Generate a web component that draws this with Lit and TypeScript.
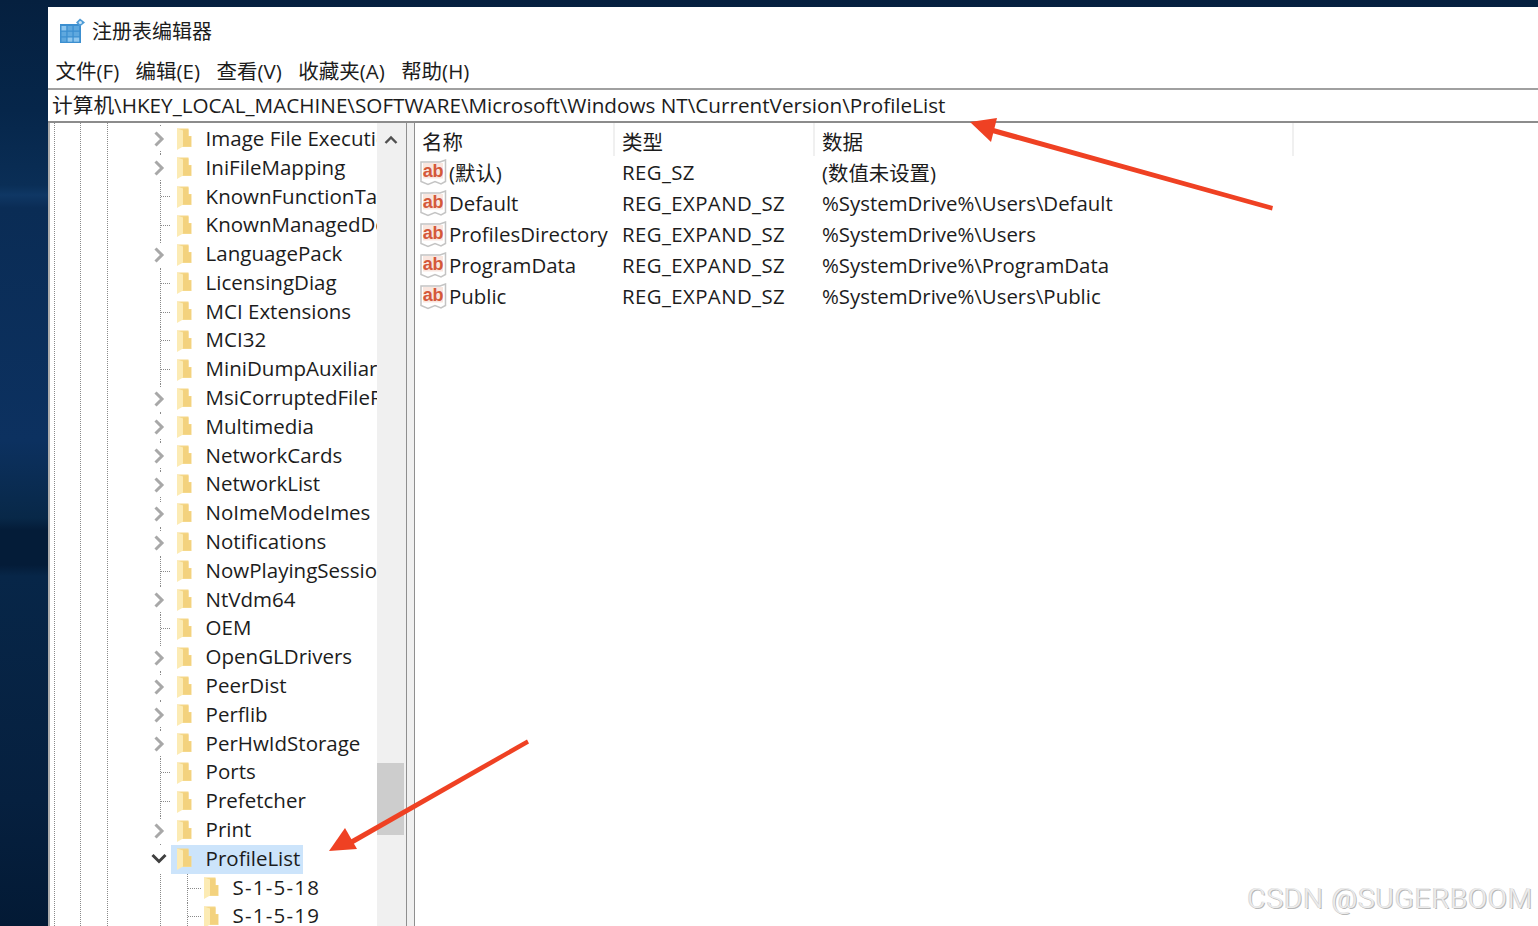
import { LitElement, html, css, svg } from "lit";
import { customElement } from "lit/decorators.js";

type Kind = "exp" | "leaf";
const rows: [string, Kind][] = [
  ["Image File Execution Options", "exp"], ["IniFileMapping", "exp"], ["KnownFunctionTableDlls", "leaf"],
  ["KnownManagedDebuggingDlls", "leaf"], ["LanguagePack", "exp"], ["LicensingDiag", "leaf"],
  ["MCI Extensions", "leaf"], ["MCI32", "leaf"], ["MiniDumpAuxiliaryDlls", "leaf"],
  ["MsiCorruptedFileRecovery", "exp"], ["Multimedia", "exp"], ["NetworkCards", "exp"], ["NetworkList", "exp"],
  ["NoImeModeImes", "exp"], ["Notifications", "exp"], ["NowPlayingSessionManager", "leaf"], ["NtVdm64", "exp"],
  ["OEM", "leaf"], ["OpenGLDrivers", "exp"], ["PeerDist", "exp"], ["Perflib", "exp"], ["PerHwIdStorage", "exp"],
  ["Ports", "leaf"], ["Prefetcher", "leaf"], ["Print", "exp"],
];
const values = [
  ["(默认)", "REG_SZ", "(数值未设置)"],
  ["Default", "REG_EXPAND_SZ", "%SystemDrive%\\Users\\Default"],
  ["ProfilesDirectory", "REG_EXPAND_SZ", "%SystemDrive%\\Users"],
  ["ProgramData", "REG_EXPAND_SZ", "%SystemDrive%\\ProgramData"],
  ["Public", "REG_EXPAND_SZ", "%SystemDrive%\\Users\\Public"],
];

const folder = html`<svg class="folder" viewBox="0 0 16 24" width="16" height="24">
  <path d="M1 1.500H12.500V9H15.500V20H5V18H1Z" fill="#f5d88a"/>
  <path d="M7 2.500H12.500V9.500H15V19H7Z" fill="#f3d27e"/>
  <path d="M1 1.500L7 3.500V19.500L1 23Z" fill="#fcebb4"/>
</svg>`;
const chevRight = html`<svg class="chev" viewBox="0 0 12 18" width="12" height="18"><path d="M1.500 2.500L8 9L1.500 15.500" fill="none" stroke="#a8a8a8" stroke-width="3"/></svg>`;
const chevDown = html`<svg class="chev" viewBox="0 0 16 12" width="16" height="12"><path d="M1.500 2L8 8.500L14.500 2" fill="none" stroke="#404040" stroke-width="3"/></svg>`;
const abIcon = html`<svg class="ab" viewBox="0 0 27 27" width="27" height="27">
  <path d="M1 3H20L25.500 1V22.500L21 25L15 22.500L8 25.500L1 22.500Z" fill="#fff" stroke="#c4c4c4" stroke-width="1.500"/>
  <rect x="3" y="4" width="20" height="15.500" fill="#f9e6df"/>
  <text x="13" y="17.500" text-anchor="middle" font-family="'Liberation Sans',sans-serif" font-weight="700" font-size="18" letter-spacing="-0.3" fill="#d4583a">ab</text>
</svg>`;
const regIcon = html`<svg class="reg" viewBox="0 0 26 26" width="26" height="26">
  <rect x="1" y="6" width="21" height="19" fill="#3c8fd0"/>
  <g fill="#8ec6ee">
    <rect x="2.500" y="8" width="4.800" height="4.500"/><rect x="8.600" y="8" width="4.800" height="4.500" fill="#5fa8de"/><rect x="14.700" y="8" width="5.500" height="4.500" fill="#5fa8de"/>
    <rect x="2.500" y="13.800" width="4.800" height="4.500" fill="#5fa8de"/><rect x="8.600" y="13.800" width="4.800" height="4.500" fill="#5fa8de"/><rect x="14.700" y="13.800" width="5.500" height="4.500" fill="#5fa8de"/>
    <rect x="2.500" y="19.500" width="4.800" height="4.200" fill="#5fa8de"/><rect x="8.600" y="19.500" width="4.800" height="4.200"/><rect x="14.700" y="19.500" width="5.500" height="4.200"/>
  </g>
  <path d="M21 0.500L26 4.500L21 8.500L17 4.500Z" fill="#4d9bd6"/><circle cx="21.300" cy="4.500" r="1.600" fill="#cfe6f7"/>
</svg>`;

@customElement("app-root")
export class AppRoot extends LitElement {
  static styles = css`
    :host { display: block; width: 1538px; height: 926px; overflow: hidden; position: relative;
      background: linear-gradient(180deg, #05203f 0, #06264a 110px, #0a2e56 185px, #0f3764 195px, #0a2c55 208px, #0c3160 440px, #082848 518px, #041c38 530px, #041c38 565px, #072648 576px, #06203f 800px, #031a35 926px);
      font-family: "Open Sans", "Noto Sans CJK SC", sans-serif; color: #1c1c1c; }
    .win { margin: 7px 0 0 48px; height: 919px; background: #fff; display: flex; flex-direction: column; }
    .title { height: 46px; display: flex; align-items: center; padding-left: 11px; gap: 7px; font-size: 20px; box-sizing: border-box; }
    .reg { margin-top: 1px; }
    .menu { height: 35px; display: flex; align-items: center; padding: 0 0 1px 7.500px; box-sizing: border-box; gap: 16.400px; font-size: 20.500px; }
    .addr { height: 35px; box-sizing: border-box; border-top: 2px solid #a0a0a0; border-bottom: 2px solid #8c8c8c; display: flex; align-items: center; padding: 0 0 3px 4px; font-size: 20.700px; white-space: nowrap; }
    .body { flex: 1; display: flex; min-height: 0; }
    .tree { width: 329px; flex: none; padding-top: 2px; overflow: hidden; box-sizing: border-box; border-left: 2px solid #ababab;
      background-image: repeating-linear-gradient(180deg, #8a8a8a 0 1px, transparent 1px 2px), repeating-linear-gradient(180deg, #8a8a8a 0 1px, transparent 1px 2px), repeating-linear-gradient(180deg, #8a8a8a 0 1px, transparent 1px 2px);
      background-size: 1px 100%; background-repeat: no-repeat; background-position: 4px 0, 30px 0, 57px 0; }
    .row { height: 28.800px; display: flex; align-items: center; font-size: 20.500px; white-space: nowrap; }
    .gut { width: 100px; flex: none; }
    .exp { width: 21px; height: 100%; flex: none; display: flex; align-items: center; justify-content: center; }
    .exp.line, .exp.dots { background: repeating-linear-gradient(180deg, #8a8a8a 0 1px, transparent 1px 2px) 10px 0 / 1px 100% no-repeat; }
    .exp .chev { background: #fff; padding: 3px 0; margin-left: -1px; }
    .exp .down { display: flex; margin-left: -3px; }
    .stub { width: 11px; height: 1px; margin-left: 11px; background: repeating-linear-gradient(90deg, #8a8a8a 0 1px, transparent 1px 2px); }
    .item { display: flex; align-items: center; height: 100%; padding-left: 5px; flex: none; }
    .item span { padding: 0 0 3px 0.600px; }
    .folder { flex: none; margin-right: 13px; }
    .sel { background: #cce4fb; padding-right: 2.500px; }
    .exp2 { width: 32px; height: 100%; flex: none; background: repeating-linear-gradient(180deg, #8a8a8a 0 1px, transparent 1px 2px) 16px 0 / 1px 100% no-repeat; display: flex; align-items: center; }
    .exp2 .stub { width: 14px; margin-left: 17px; }
    .sub .item { padding-left: 0; letter-spacing: 1.200px; }
    .scroll { width: 29px; flex: none; background: #f0f0f0; display: flex; flex-direction: column; align-items: flex-start; }
    .up { width: 27px; height: 34px; display: flex; align-items: center; justify-content: center; }
    .thumb { width: 27px; height: 72px; margin-top: 606px; background: #cdcdcd; }
    .split { width: 7px; flex: none; background: #f0f0f0; border-left: 1px solid #8f8f8f; border-right: 1px solid #8f8f8f; }
    .list { flex: 1; min-width: 0; font-size: 20.400px; }
    .head { height: 34px; display: grid; grid-template-columns: 200px 200px 479px; width: 879px; font-size: 20.500px; }
    .head span { padding: 2px 0 0 7px; box-sizing: border-box; border-right: 2px solid #f0f0f0; height: 33px; display: flex; align-items: center; }
    .vrow { display: grid; grid-template-columns: 200px 200px 1fr; height: 31px; align-items: center; white-space: nowrap; }
    .name { display: flex; align-items: center; padding-left: 5px; gap: 2px; }
    .name span { padding-bottom: 1px; }
    .type { padding: 0 0 1px 7px; letter-spacing: 0.400px; }
    .data { padding: 0 0 1px 7px; }
    .over { position: absolute; inset: 0; pointer-events: none; }
    .mark { position: absolute; right: 5px; top: 882px; font: 300 28px Roboto, sans-serif; color: #ececec; letter-spacing: 0.850px; text-shadow: 1px 1px 0 #b8b8b8, -1px 0 0 #d8d8d8; white-space: nowrap; }
  `;

  render() {
    return html`
      <div class="win">
        <div class="title">${regIcon}<span>注册表编辑器</span></div>
        <div class="menu"><span>文件(F)</span><span>编辑(E)</span><span>查看(V)</span><span>收藏夹(A)</span><span>帮助(H)</span></div>
        <div class="addr">计算机\\HKEY_LOCAL_MACHINE\\SOFTWARE\\Microsoft\\Windows NT\\CurrentVersion\\ProfileList</div>
        <div class="body">
          <div class="tree">
            ${rows.map(([n, k]) => html`<div class="row"><div class="gut"></div>
              ${k === "exp"
                ? html`<div class="exp dots">${chevRight}</div>`
                : html`<div class="exp line"><div class="stub"></div></div>`}
              <div class="item">${folder}<span>${n}</span></div></div>`)}
            <div class="row"><div class="gut"></div><div class="exp"><div class="down">${chevDown}</div></div>
              <div class="item sel">${folder}<span>ProfileList</span></div></div>
            <div class="row sub"><div class="gut"></div><div class="exp line"></div><div class="exp2"><div class="stub"></div></div><div class="item">${folder}<span>S-1-5-18</span></div></div>
            <div class="row sub"><div class="gut"></div><div class="exp line"></div><div class="exp2"><div class="stub"></div></div><div class="item">${folder}<span>S-1-5-19</span></div></div>
          </div>
          <div class="scroll">
            <div class="up"><svg viewBox="0 0 14 10" width="14" height="10"><path d="M1.500 8L7 2.500L12.500 8" fill="none" stroke="#505050" stroke-width="2.400"/></svg></div>
            <div class="thumb"></div>
          </div>
          <div class="split"></div>
          <div class="list">
            <div class="head"><span>名称</span><span>类型</span><span>数据</span></div>
            ${values.map(v => html`<div class="vrow"><span class="name">${abIcon}<span>${v[0]}</span></span><span class="type">${v[1]}</span><span class="data">${v[2]}</span></div>`)}
          </div>
        </div>
      </div>
      <svg class="over" viewBox="0 0 1538 926" width="1538" height="926">
        ${svg`<g fill="#ef4123" stroke="none">
          <path d="M1273 206L990 127L988.500 132L1272 210.500Z"/>
          <path d="M970 122L997 118L991 142Z"/>
          <path d="M527 739.500L350 840L352.500 844.500L529 743.500Z"/>
          <path d="M329 851L345 828L357 849Z"/>
        </g>`}
      </svg>
      <div class="mark">CSDN @SUGERBOOM</div>
    `;
  }
}
